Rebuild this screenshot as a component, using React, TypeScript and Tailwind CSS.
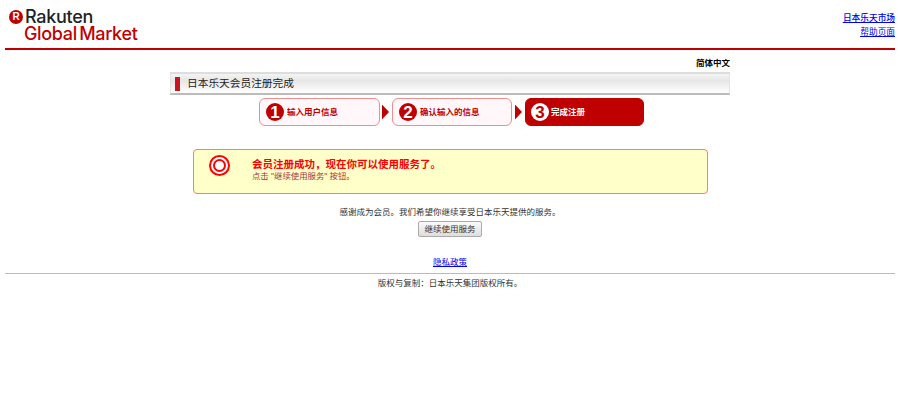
const cjk = "font-['Liberation_Sans','Noto_Sans_CJK_SC',sans-serif]";

function Step({ n, label, active, className }: { n: string; label: string; active?: boolean; className: string }) {
  return (
    <div
      className={`flex h-7 items-center rounded-[6px] border ${className} ${
        active ? "border-[#bf0000] bg-[#bf0000] pl-[5px] text-white" : "border-[#ee8f8f] bg-[#fff7fa] pl-[6px] text-[#bf0000]"
      }`}
    >
      <span
        className={`flex size-[18px] items-center justify-center rounded-full font-['Liberation_Sans',sans-serif] text-[17px] leading-none font-bold ${
          active ? "bg-white text-[#bf0000]" : "bg-[#bf0000] text-white"
        }`}
      >
        {n}
      </span>
      <span className={`text-[8.5px] font-bold ${active ? "ml-[2px]" : "ml-[3px]"}`}>{label}</span>
    </div>
  );
}

function Arrow({ className }: { className: string }) {
  return <div className={`h-[15px] w-[7px] bg-[#bf0000] [clip-path:polygon(0_0,100%_50%,0_100%)] ${className}`} />;
}

export default function App() {
  return (
    <div className={`h-[410px] w-[900px] bg-white px-[5px] text-[#333] ${cjk}`}>
      <header className="flex h-[50px] justify-between border-b-2 border-[#bf0000]">
        <div className="pt-[9px] pl-[4px]">
          <div className="flex h-[15px] items-center">
            <span className="flex size-[14px] items-center justify-center rounded-full bg-[#bf0000] font-['Liberation_Sans',sans-serif] text-[10px] font-bold text-white">
              R
            </span>
            <span className="ml-[2px] font-['Inter',sans-serif] text-[18px] leading-[15px] font-medium tracking-[-0.3px] text-[#222]">
              Rakuten
            </span>
          </div>
          <div className="mt-[1px] ml-[15px] font-['Inter',sans-serif] text-[18px] leading-[17px] font-medium tracking-[-0.35px] [word-spacing:-2px] whitespace-nowrap text-[#bf0000]">
            Global Market
          </div>
        </div>
        <div className="flex flex-col items-end pt-[11px] text-[8.7px] leading-[14px] text-[#0000ee] underline">
          <a href="#" className="font-medium">日本乐天市场</a>
          <a href="#">帮助页面</a>
        </div>
      </header>

      <main className="mx-auto flex w-[560px] flex-col items-center">
        <div className="mt-[7px] flex h-[13px] w-full items-center justify-end text-[8.5px] font-bold text-black">简体中文</div>
        <div className="mt-[2px] flex h-[23px] w-full items-center border-x border-t-2 border-b-2 border-x-[#e4e4e4] border-t-[#ddd] border-b-[#bbb] bg-gradient-to-b from-[#f4f4f4] via-[#e6e6e6] via-35% to-white pl-[4px]">
          <span className="h-[14px] w-[5px] bg-[#c9151e]" />
          <h1 className="ml-[7px] text-[10.7px] font-normal text-[#222]">日本乐天会员注册完成</h1>
        </div>

        <div className="mt-[3px] ml-[3px] flex items-center">
          <Step n="1" label="输入用户信息" className="w-[121px]" />
          <Arrow className="mr-[3px] ml-[2px]" />
          <Step n="2" label="确认输入的信息" className="w-[120px]" />
          <Arrow className="mx-[3px]" />
          <Step n="3" label="完成注册" active className="w-[119px]" />
        </div>

        <div className="mt-[23px] ml-[1px] flex h-[45px] w-[515px] rounded-[4px] border border-[#ff7a7a] bg-[#ffffc9]">
          <div className="mt-[5px] ml-[15px] size-[21px] rounded-full border-2 border-[#f00] bg-white p-[2px]">
            <div className="size-full rounded-full border-2 border-[#f00] bg-white" />
          </div>
          <div className="ml-[22px] pt-[7px]">
            <p className="text-[10.5px] leading-[14px] font-bold text-[#f00]">会员注册成功，现在你可以使用服务了。</p>
            <p className="text-[8.4px] leading-[10px] text-[#a33]">点击 "继续使用服务" 按钮。</p>
          </div>
        </div>

        <p className="mt-[12px] text-[8.5px] leading-[13px]">感谢成为会员。我们希望你继续享受日本乐天提供的服务。</p>
        <button className="mt-[2px] h-[16px] w-[64px] rounded-[2px] border border-[#aaa] bg-gradient-to-b from-[#fafafa] to-[#dedede] text-[8.5px] text-[#333]">
          继续使用服务
        </button>
        <a href="#" className="mt-[19px] text-[8.5px] leading-[13px] text-[#0000ee] underline">隐私政策</a>
      </main>

      <footer className="mt-[4px] border-t border-[#bbb] pt-[3px] text-center text-[8.5px] leading-[13px]">
        版权与复制：日本乐天集团版权所有。
      </footer>
    </div>
  );
}
